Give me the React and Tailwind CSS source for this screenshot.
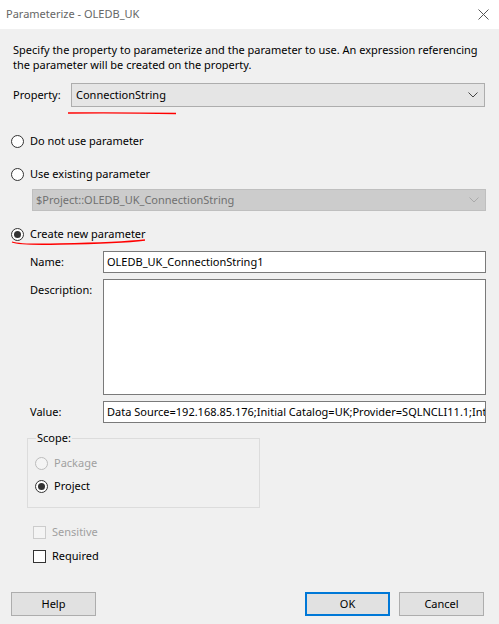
import React from "react";

const font = { fontFamily: '"Noto Sans", "Segoe UI", sans-serif' };

const Chevron = ({ color = "#444" }) => (
  <svg width="10" height="6" viewBox="0 0 10 6" fill="none">
    <path d="M0.5 0.5 L5 5 L9.5 0.5" stroke={color} strokeWidth="1" />
  </svg>
);

const Radio = ({ checked, disabled, label }) => (
  <div className="flex items-center h-4">
    <span
      className={`w-[13px] h-[13px] rounded-full border flex items-center justify-center ${
        disabled ? "border-[#bcbcbc] bg-[#f4f4f4]" : "border-[#333] bg-white"
      }`}
    >
      {checked && <span className="w-[7px] h-[7px] rounded-full bg-[#333]" />}
    </span>
    <span className={`ml-[6px] ${disabled ? "text-[#a0a0a0]" : "text-black"}`}>{label}</span>
  </div>
);

const Check = ({ disabled, label }) => (
  <div className="flex items-center h-4">
    <span
      className={`w-[13px] h-[13px] border ${
        disabled ? "border-[#cccccc] bg-[#f4f4f4]" : "border-[#333] bg-white"
      }`}
    />
    <span className={`ml-[6px] ${disabled ? "text-[#a0a0a0]" : "text-black"}`}>{label}</span>
  </div>
);

const Field = ({ label, children, className = "" }) => (
  <div className={`flex items-start ${className}`}>
    <span className="w-[73px] pl-[30px] shrink-0 box-content">{label}</span>
    {children}
  </div>
);

export default function App() {
  return (
    <div
      className="w-[499px] h-[624px] bg-[#f0f0f0] text-[11px] text-black relative overflow-hidden flex flex-col"
      style={font}
    >
      {/* Title bar */}
      <div className="h-[29px] bg-white flex items-center justify-between pl-[6px] pr-[10px] shrink-0">
        <span className="text-[#666] text-[11px]">Parameterize - OLEDB_UK</span>
        <svg width="11" height="11" viewBox="0 0 11 11">
          <path d="M0.5 0.5 L10.5 10.5 M10.5 0.5 L0.5 10.5" stroke="#555" strokeWidth="1" />
        </svg>
      </div>

      {/* Intro */}
      <p className="px-[13px] pt-[13px] leading-[15px] whitespace-nowrap">
        Specify the property to parameterize and the parameter to use. An expression referencing
        <br />
        the parameter will be created on the property.
      </p>

      {/* Property */}
      <div className="flex items-center mt-[11px] pl-[13px]">
        <span className="w-[58px]">Property:</span>
        <div className="w-[414px] h-[24px] bg-[#e5e5e5] border border-[#adadad] flex items-center justify-between pl-[4px] pr-[6px]">
          <span>ConnectionString</span>
          <Chevron />
        </div>
      </div>

      {/* Options */}
      <div className="pl-[11px] mt-[26px]">
        <Radio label="Do not use parameter" />
      </div>
      <div className="pl-[11px] mt-[17px]">
        <Radio label="Use existing parameter" />
      </div>
      <div className="ml-[32px] mt-[7px] w-[454px] h-[22px] bg-[#cccccc] border border-[#bfbfbf] flex items-center justify-between pl-[3px] pr-[6px]">
        <span className="text-[#707070]">$Project::OLEDB_UK_ConnectionString</span>
        <Chevron color="#aaa" />
      </div>
      <div className="pl-[11px] mt-[15px]">
        <Radio checked label="Create new parameter" />
      </div>

      {/* New parameter fields */}
      <Field label={<span className="leading-[22px]">Name:</span>} className="mt-[9px]">
        <div className="w-[383px] h-[22px] bg-white border border-[#7a7a7a] flex items-center pl-[3px]">
          OLEDB_UK_ConnectionString1
        </div>
      </Field>
      <Field label={<span className="block pt-[3px] leading-[16px]">Description:</span>} className="mt-[6px]">
        <div className="w-[383px] h-[116px] bg-white border border-[#7a7a7a]" />
      </Field>
      <Field label={<span className="leading-[22px]">Value:</span>} className="mt-[6px]">
        <div className="w-[383px] h-[22px] bg-white border border-[#7a7a7a] flex items-center pl-[3px] overflow-hidden whitespace-nowrap">
          Data Source=192.168.85.176;Initial Catalog=UK;Provider=SQLNCLI11.1;Integrated Security=SSPI;
        </div>
      </Field>

      {/* Scope */}
      <div className="ml-[27px] mt-[15px] w-[233px] h-[70px] border border-[#dcdcdc] relative px-[7px] pt-[16px]">
        <span className="absolute left-[8px] -top-[9px] bg-[#f0f0f0] px-[1px] leading-[16px]">Scope:</span>
        <Radio disabled label="Package" />
        <div className="mt-[7px]">
          <Radio checked label="Project" />
        </div>
      </div>

      <div className="pl-[33px] mt-[16px]">
        <Check disabled label="Sensitive" />
      </div>
      <div className="pl-[33px] mt-[8px]">
        <Check label="Required" />
      </div>

      {/* Buttons */}
      <div className="flex items-center mt-[28px] px-[11px]">
        <button className="w-[85px] h-[24px] bg-[#e1e1e1] border border-[#adadad]">Help</button>
        <div className="flex-1" />
        <button className="w-[85px] h-[24px] bg-[#e1e1e1] border-2 border-[#0078d7]">OK</button>
        <button className="w-[85px] h-[24px] bg-[#e1e1e1] border border-[#adadad] ml-[9px] mr-[4px]">Cancel</button>
      </div>

      {/* Red annotation underlines */}
      <svg className="absolute left-0 top-0 pointer-events-none" width="499" height="624">
        <path d="M68 113 Q120 112.5 176 113.5" stroke="#ff0000" strokeWidth="1.3" fill="none" />
        <path d="M12 242 Q20 245 60 244 Q120 243 145 240" stroke="#ff0000" strokeWidth="1.3" fill="none" />
      </svg>
    </div>
  );
}
